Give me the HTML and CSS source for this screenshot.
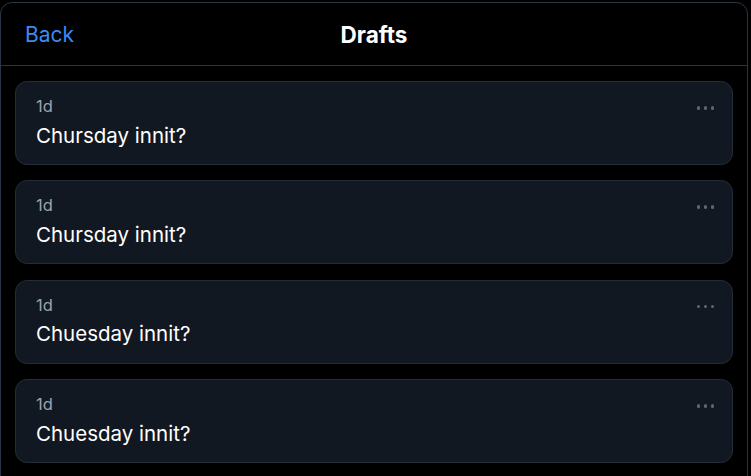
FILE: index.html
```html
<!DOCTYPE html>
<html>
<head>
<meta charset="utf-8">
<link rel="stylesheet" href="styles.css">
</head>
<body>
<div class="frame">
  <header class="topbar">
    <a class="back">Back</a>
    <h1 class="title">Drafts</h1>
    <span class="spacer"></span>
  </header>
  <main class="list">
    <article class="card">
      <div class="card-body">
        <div class="age">1d</div>
        <div class="text">Chursday innit?</div>
      </div>
      <button class="more" aria-label="More"><span></span><span></span><span></span></button>
    </article>
    <article class="card">
      <div class="card-body">
        <div class="age">1d</div>
        <div class="text">Chursday innit?</div>
      </div>
      <button class="more" aria-label="More"><span></span><span></span><span></span></button>
    </article>
    <article class="card">
      <div class="card-body">
        <div class="age">1d</div>
        <div class="text">Chuesday innit?</div>
      </div>
      <button class="more" aria-label="More"><span></span><span></span><span></span></button>
    </article>
    <article class="card">
      <div class="card-body">
        <div class="age">1d</div>
        <div class="text">Chuesday innit?</div>
      </div>
      <button class="more" aria-label="More"><span></span><span></span><span></span></button>
    </article>
  </main>
</div>
</body>
</html>
```
FILE: styles.css
```css
html, body {
  margin: 0;
  padding: 0;
  background: #000;
  font-family: Inter, "Noto Sans", sans-serif;
  overflow: hidden;
}
.frame {
  margin-top: 2px;
  width: 748px;
  height: 520px;
  box-sizing: border-box;
  border: 1px solid #2b3445;
  border-radius: 12px;
  background: #000;
}
.topbar {
  height: 62px;
  display: flex;
  align-items: center;
  justify-content: space-between;
  padding: 0 24px;
  border-bottom: 1px solid #2b3445;
}
.back {
  color: #3d8af3;
  font-size: 21px;
  width: 60px;
}
.title {
  margin: 0;
  color: #fff;
  font-size: 22.5px;
  font-weight: 700;
}
.spacer {
  width: 60px;
}
.list {
  padding: 15px 14px;
  display: flex;
  flex-direction: column;
  gap: 15.4px;
}
.card {
  display: flex;
  justify-content: space-between;
  align-items: flex-start;
  background: #121821;
  border: 1px solid #242c39;
  border-radius: 12px;
  padding: 12px 18px 13px 20px;
  height: 84px;
  box-sizing: border-box;
}
.card-body {
  display: flex;
  flex-direction: column;
  gap: 3.5px;
}
.age {
  color: #9ba3af;
  font-size: 16.5px;
  line-height: 24px;
}
.text {
  color: #fff;
  font-size: 20.5px;
  line-height: 28px;
}
.more {
  display: flex;
  gap: 3.5px;
  background: none;
  border: 0;
  padding: 0;
  margin-top: 12px;
}
.more span {
  width: 3.5px;
  height: 3.5px;
  border-radius: 50%;
  background: #5d6779;
}
```
